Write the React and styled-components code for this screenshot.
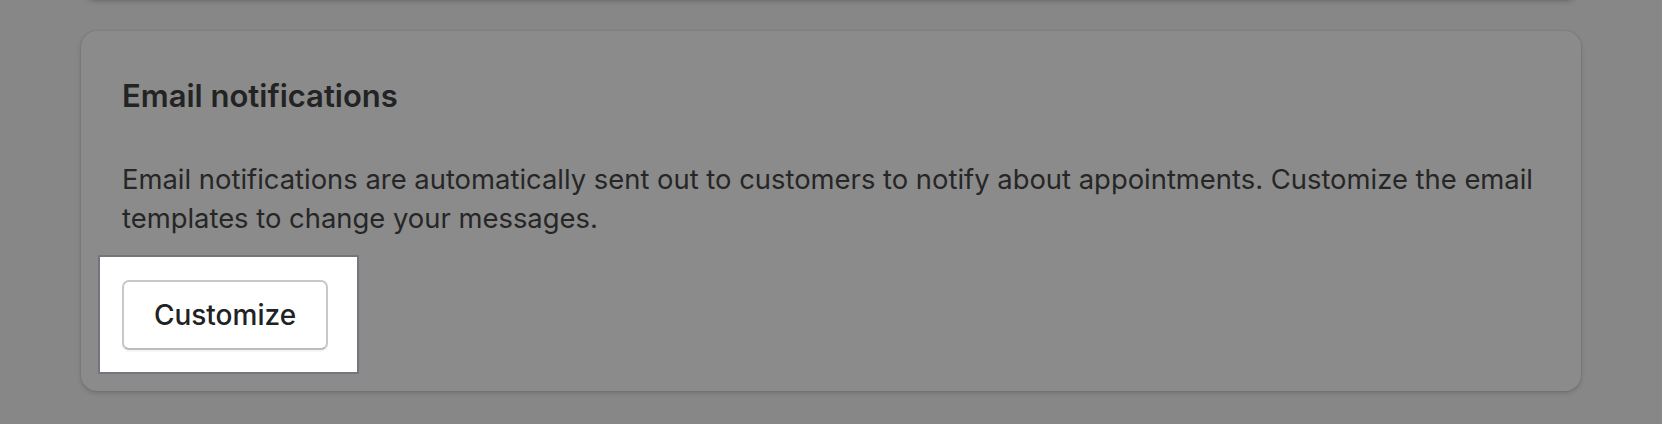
import React from 'react';
import styled, { createGlobalStyle } from 'styled-components';

const GlobalStyle = createGlobalStyle`
	html, body {
		margin: 0;
		padding: 0;
		background: #878788;
	}
	body {
		font-family: Inter, "Noto Sans", sans-serif;
		color: #232323;
		overflow: hidden;
	}
`;

const Page = styled.div`
	display: flex;
	flex-direction: column;
	gap: 31px;
	padding: 0 81px;
	height: 424px;
	box-sizing: border-box;
`;

const Card = styled.section`
	background: #8b8b8b;
	box-shadow: 0 0 0 1px rgba(40, 40, 45, 0.05), 0 2px 4px rgba(40, 40, 45, 0.22);
	padding: ${props => props.$stub ? '0' : '45px 40px 17px 41px'};
	height: ${props => props.$stub ? '16px' : 'auto'};
	margin-top: ${props => props.$stub ? '-16px' : '0'};
	border-radius: ${props => props.$stub ? '0 0 16px 16px' : '16px'};
`;

const Title = styled.h2`
	margin: 0 0 44px;
	font-size: 31px;
	line-height: 40px;
	font-weight: 600;
	color: #232323;
`;

const Text = styled.p`
	margin: 0;
	font-size: 27.4px;
	line-height: 39px;
	font-weight: 400;
	color: #262626;
`;

const Spotlight = styled.div`
	display: inline-flex;
	margin: 17px 0 0 -24px;
	padding: 23px 29px 22px 22px;
	background: #ffffff;
	border: 2px solid #74767f;
`;

const Button = styled.button`
	width: 206px;
	height: 70px;
	border-radius: 7px;
	background: #ffffff;
	border: 2px solid #c6c8cc;
	border-bottom-color: #b9bcc1;
	box-shadow: 0 2px 0 rgba(0, 0, 0, 0.04);
	font-family: Inter, "Noto Sans", sans-serif;
	font-size: 28px;
	font-weight: 500;
	color: #202223;
	cursor: pointer;
`;

function App() {
	return (
		<>
			<GlobalStyle />
			<Page>
				<Card $stub />
				<Card>
					<Title>Email notifications</Title>
					<Text>
						Email notifications are automatically sent out to customers to notify about appointments. Customize the email templates to change your messages.
					</Text>
					<div>
						<Spotlight>
							<Button>Customize</Button>
						</Spotlight>
					</div>
				</Card>
			</Page>
		</>
	);
}

export default App;
